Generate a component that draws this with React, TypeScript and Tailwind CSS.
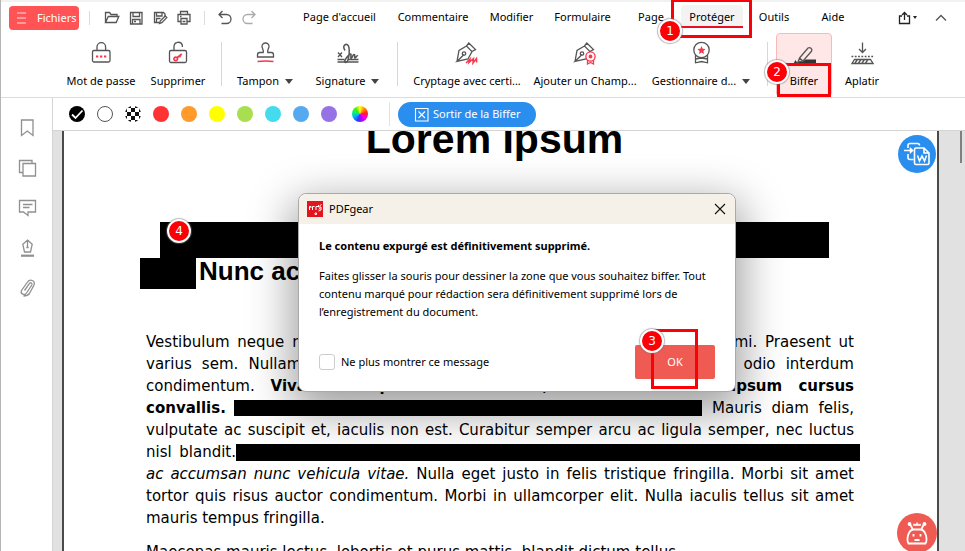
import type { ReactNode } from "react";

type IconProps = { children: ReactNode; size?: number; className?: string };

function Icon({ children, size = 24, className = "text-[#555]" }: IconProps) {
  return (
    <svg
      width={size}
      height={size}
      viewBox={`0 0 ${size} ${size}`}
      fill="none"
      stroke="currentColor"
      strokeWidth="1.3"
      aria-hidden="true"
      className={`shrink-0 ${className}`}
    >
      {children}
    </svg>
  );
}

const RED = "#f5384b";

const quickIcons: { label: string; art: ReactNode }[] = [
  {
    label: "Ouvrir",
    art: (
      <Icon size={16}>
        <path d="M1.500 12.500V2.500h4l1.500 2h6v2M1.500 12.500l2.800-6h10.500l-2.600 6z" />
      </Icon>
    ),
  },
  {
    label: "Enregistrer",
    art: (
      <Icon size={16}>
        <path d="M2.500 2.500h11.500v11.500h-11.500zM5 2.500v4h6.500v-4M4.500 14v-4.500h7.500v4.500M6 11.500h2" />
      </Icon>
    ),
  },
  {
    label: "Enregistrer sous",
    art: (
      <Icon size={16}>
        <path d="M7 12.500H2.500v-10h9l1.500 1.500v2M4.500 2.500v3.500h5.500v-3.500M4.500 12.500v-4h4" />
        <path d="M7.500 13.500l.7-2.500 5-5 1.600 1.600-5 5z" />
      </Icon>
    ),
  },
  {
    label: "Imprimer",
    art: (
      <Icon size={16}>
        <path d="M4.500 4.500v-3h7v3M4.500 11.500h-2.500v-7h12v7h-2.500M5 8.500h6v5.500H5zM6.500 11.500h3M4 6.500h1.500" />
      </Icon>
    ),
  },
];

const tabs = [
  { label: "Page d'accueil", width: "w-[95px]" },
  { label: "Commentaire", width: "w-[92px]" },
  { label: "Modifier", width: "w-[65px]" },
  { label: "Formulaire", width: "w-[77px]" },
  { label: "Page", width: "w-[60px]" },
  { label: "Protéger", width: "w-[62px]", active: true },
  { label: "Outils", width: "w-[62px]" },
  { label: "Aide", width: "w-[56px]" },
];

const penNib = (
  <path d="M2 20.500l2-11 7.500-4.500 5.500 5.500-4 7.500-11 2.500 7-7M10.700 12.500a1.700 1.700 0 1 1-3.400 0 1.700 1.700 0 0 1 3.400 0M11.500 5l2.300-3 6.700 6.500-3.500 2" />
);

type Tool = { label: string; width: string; menu?: boolean; active?: boolean; art: ReactNode };

const toolGroups: Tool[][] = [
  [
    {
      label: "Mot de passe",
      width: "w-[78px]",
      art: (
        <Icon>
          <rect x="3.500" y="9.500" width="17.500" height="11.500" rx="1.500" />
          <path d="M8 9.500V6a4.300 4.300 0 0 1 8.600 0v3.500" />
          <path d="M7 15.500h2.300M11 15.500h2.300M15 15.500h2.300" stroke={RED} strokeWidth="2.200" />
        </Icon>
      ),
    },
    {
      label: "Supprimer",
      width: "w-[76px]",
      art: (
        <Icon>
          <rect x="3.500" y="9.500" width="17" height="12" rx="1.500" />
          <path d="M8 9.500V5.500a4.300 4.300 0 0 1 8.300-1.500V6" />
          <path d="M11.500 17.500a1.800 1.800 0 1 1-3.500 0 1.800 1.800 0 0 1 3.500 0M11.300 16.500l4.500-3.500M13.500 15l1 1.300" stroke={RED} strokeWidth="1.700" />
        </Icon>
      ),
    },
  ],
  [
    {
      label: "Tampon",
      width: "w-[76px]",
      menu: true,
      art: (
        <Icon>
          <path d="M10.200 11.500c.8-2.500-1.200-4-1.200-6a3.500 3.500 0 0 1 7 0c0 2-2 3.500-1.200 6h3.700q2 0 2 2.500v2h-16V14q0-2.500 2-2.500z" />
          <path d="M4.500 20.500q8-1 16 0" stroke={RED} strokeWidth="1.700" />
        </Icon>
      ),
    },
    {
      label: "Signature",
      width: "w-[89px]",
      menu: true,
      art: (
        <Icon>
          <path d="M2 11.500l4 4.500M6 11.500L2 16M1.500 18.500h7M12 18.500h10.500M1.500 21h21" />
          <path d="M9 9.500C5.500 4 11 1.500 12.500 5c1.500 4 .5 17-3 16.500-3-.5 3-8 5-8.500 1.500 0-.5 4 .5 4.500 1.500 0 1.500-4 3-4s0 3.500 1 3.500 1.500-3 3-2" strokeWidth="1.500" />
        </Icon>
      ),
    },
  ],
  [
    {
      label: "Cryptage avec certi...",
      width: "w-[128px]",
      art: (
        <Icon>
          {penNib}
          <path d="M11 22l4-4-1 3.500 4.500-4-.5 4.500 3.500-4.500.2 4" stroke={RED} strokeWidth="1.500" />
        </Icon>
      ),
    },
    {
      label: "Ajouter un Champ...",
      width: "w-[108px]",
      art: (
        <Icon>
          {penNib}
          <circle cx="17.500" cy="15.500" r="4.600" fill="white" stroke={RED} />
          <circle cx="17.500" cy="15.500" r="1.300" fill={RED} stroke={RED} />
          <path d="M14.500 19v4l3-1.500 3 1.500v-4" stroke={RED} />
        </Icon>
      ),
    },
    {
      label: "Gestionnaire d...",
      width: "w-[124px]",
      menu: true,
      art: (
        <Icon>
          <circle cx="12.500" cy="9" r="7.700" />
          <path d="M6.500 14v7.800l6-1.300 6 1.300v-7.800M6.500 18l6-1 6 1" />
          <path d="M12.500 5l1.200 2.700 2.900.3-2.200 2 .6 2.900-2.500-1.500-2.500 1.500.6-2.900-2.200-2 2.900-.3z" fill={RED} stroke="none" />
        </Icon>
      ),
    },
  ],
  [
    {
      label: "Biffer",
      width: "w-14",
      active: true,
      art: (
        <Icon>
          <path d="M7.500 17L16 7q1.500-1 3 .3t.5 3L11 20l-5 1zM7.500 17l3.500 3" />
          <path d="M13.500 18.500H24v5H1l2.500-4.500 1.500 2.500 6-1z" fill="#333" stroke="none" />
        </Icon>
      ),
    },
    {
      label: "Aplatir",
      width: "w-[60px]",
      art: (
        <Icon>
          <path d="M12.500 1.500v9.500M9 8l3.500 3.500L16 8" />
          <path d="M1.500 15.500h22" strokeDasharray="1.800 1.500" />
          <path d="M4.500 18.500h16l2.500 4h-21zM5 22l2.500-3.500M8.500 22l2.500-3.500M12 22l2.500-3.500M15.500 22l2.500-3.500" />
        </Icon>
      ),
    },
  ],
];

const sideIcons: { label: string; art: ReactNode }[] = [
  { label: "Signets", art: <path d="M4.500 2h11.500v15.500l-5.700-4.500-5.800 4.500z" /> },
  { label: "Pages", art: <path d="M6 5.500h12.500v12.500H6zM6 14.500H2.500V2.500h12.500v3" /> },
  { label: "Commentaires", art: <path d="M2.500 2.500h16v11.500h-7.500v3.500l-4.500-3.500h-4zM6 6.500h9.500M6 9.500h6.500" /> },
  {
    label: "Signatures",
    art: (
      <>
        <path d="M10.500 2l4.700 4.200-1.700 7.800h-6l-1.700-7.800zM10.500 2.500v6.500M9.300 9.500h2.400" />
        <path d="M4 17.700h13" strokeWidth="2.200" />
      </>
    ),
  },
  {
    label: "Pièces jointes",
    art: <path d="M7.500 12.500l5-7c1-1.500 3.200-.2 2.300 1.500L9.500 15c-2 3-6.500 1-5-2.500l6-8.500c2.500-3.500 8-1.500 6.500 3L12.500 15.500c-1.500 2-4 2.500-6 2.500" />,
  },
];

const colors = [
  { name: "Rouge", fill: "bg-[#ff3333]" },
  { name: "Orange", fill: "bg-[#ff9a2b]" },
  { name: "Jaune", fill: "bg-[#ffff00]" },
  { name: "Vert", fill: "bg-[#a8df50]" },
  { name: "Cyan", fill: "bg-[#44dbef]" },
  { name: "Bleu", fill: "bg-[#55a9ee]" },
  { name: "Violet", fill: "bg-[#9673e4]" },
];

const checks = [0, 1, 2, 3, 4].flatMap((row) =>
  [0, 1, 2, 3, 4].filter((col) => (row + col) % 2 === 1).map((col) => [col * 4 - 2, row * 4 - 2]),
);

function Marker({ n, place }: { n: number; place: string }) {
  return (
    <span
      className={`absolute z-20 flex size-6 items-center justify-center rounded-full border-2 border-white bg-[#fb0007] font-['DejaVu_Sans',sans-serif] text-xs text-white shadow-[0_0_1px_1px_rgba(120,120,120,0.5)] ${place}`}
    >
      {n}
    </span>
  );
}

function Line({ children }: { children: ReactNode }) {
  return <span className="block whitespace-nowrap [text-align-last:justify]">{children}</span>;
}

function MenuBar() {
  return (
    <div className="flex h-8 items-center pl-2">
      <button className="flex h-6 w-[70px] items-center gap-2.5 rounded-sm bg-[#ff5355] pl-2 text-white">
        <svg width="10" height="12" viewBox="0 0 10 12" stroke="#ffb3b3" strokeWidth="1.500" aria-hidden="true" className="shrink-0">
          <path d="M0 1h9M0 6h9M0 11h9" />
        </svg>
        Fichiers
      </button>
      <span className="ml-2.5 h-3.5 w-px bg-[#dcdcdc]" />
      <div className="ml-3.5 flex gap-2">
        {quickIcons.map((q) => (
          <button key={q.label} aria-label={q.label}>{q.art}</button>
        ))}
      </div>
      <span className="ml-3 h-3.5 w-px bg-[#dcdcdc]" />
      <button aria-label="Annuler" className="ml-3">
        <Icon size={16}>
          <path d="M5.500 1l-3.500 3.500L5.500 8M2 4.500h7.500a4.500 4.500 0 0 1 0 9H4.500" />
        </Icon>
      </button>
      <button aria-label="Rétablir" className="ml-2">
        <Icon size={16} className="text-[#aaa]">
          <path d="M10.500 1L14 4.500 10.500 8M14 4.500H6.500a4.500 4.500 0 0 0 0 9h5" />
        </Icon>
      </button>
      <nav className="ml-[35px] flex h-full items-start pt-[3px]">
        {tabs.map((t) => (
          <button
            key={t.label}
            className={`h-[23px] shrink-0 whitespace-nowrap ${t.width} ${t.active ? "rounded-t-sm border-b-2 border-[#e81123] bg-[#f3f3f3] pt-0.5" : ""}`}
          >
            {t.label}
          </button>
        ))}
      </nav>
      <button aria-label="Partager" className="mr-4 ml-auto flex items-center">
        <Icon size={14} className="text-[#222]">
          <path d="M4 5H1.500v7.500h10V5H9M6.500 9V1.500M4 4l2.500-2.500L9 4" />
        </Icon>
        <svg width="6" height="4" viewBox="0 0 6 4" aria-hidden="true"><path d="M1 0h4L3 3z" fill="#222" /></svg>
      </button>
      <button aria-label="Réduire le ruban" className="mr-[17px]">
        <Icon size={14}>
          <path d="M2 9.500l5-5 5 5" />
        </Icon>
      </button>
    </div>
  );
}

function Toolbar() {
  return (
    <div className="flex h-16 border-b border-[#dcdcdc] pl-[61px]">
      {toolGroups.map((group, i) => (
        <div key={group[0].label} className="flex">
          {i > 0 && <span className={`mt-2 h-11 w-px bg-[#d8d8d8] ${i === 3 ? "mr-2 ml-1" : "mx-[5px]"}`} />}
          {group.map((t) => (
            <button
              key={t.label}
              className={`-mt-px flex h-16 shrink-0 flex-col items-center whitespace-nowrap border pt-[7px] ${t.width} ${
                t.active ? "rounded-sm border-[#f9b9b9] bg-[#ffe7e7]" : "border-transparent"
              }`}
            >
              {t.art}
              <span className="mt-2 flex items-center gap-1.5">
                {t.label}
                {t.menu && (
                  <svg width="8" height="5" viewBox="0 0 8 5" aria-hidden="true"><path d="M0 0h8L4 5z" fill="#444" /></svg>
                )}
              </span>
            </button>
          ))}
        </div>
      ))}
    </div>
  );
}

function ColorBar() {
  return (
    <div className="flex h-[33px] shrink-0 items-center border-b border-[#d4d4d4] bg-white pl-4">
      <div className="flex gap-3">
        <button aria-label="Noir" className="size-4 rounded-full bg-black">
          <svg width="16" height="16" viewBox="0 0 16 16" fill="none" stroke="white" strokeWidth="1.800" aria-hidden="true">
            <path d="M3 8.500l3.500 3.500L13.500 4.500" />
          </svg>
        </button>
        <button aria-label="Blanc" className="size-4 rounded-full border border-[#555] bg-white" />
        <button aria-label="Transparent" className="size-4 overflow-hidden rounded-full">
          <svg width="16" height="16" viewBox="0 0 16 16" aria-hidden="true">
            {checks.map(([x, y]) => (
              <rect key={`${x}-${y}`} x={x} y={y} width="4" height="4" fill="#111" />
            ))}
          </svg>
        </button>
        {colors.map((c) => (
          <button key={c.name} aria-label={c.name} className={`size-4 rounded-full ${c.fill}`} />
        ))}
      </div>
      <button
        aria-label="Autre couleur"
        className="ml-[15px] size-4 rounded-full bg-[conic-gradient(#ff2,#f80,#f22,#f0c,#b0f,#33f,#0af,#0e8,#4e0,#ff2)]"
      />
      <span className="ml-[21px] h-6 w-px bg-[#e2e2e2]" />
      <button className="ml-2 flex h-[25px] items-center gap-1 rounded-full bg-[#2a8eef] px-4 text-white">
        <Icon size={15} className="text-white">
          <path d="M1.500 1.500h12.500v12.500H1.500zM4.500 4.500l6.500 6.500M11 4.500l-6.500 6.500" strokeWidth="1.100" />
        </Icon>
        Sortir de la Biffer
      </button>
    </div>
  );
}

function Document() {
  return (
    <article className="mr-[26px] ml-[9px] h-full flex-1 overflow-hidden border-x-2 border-[#4a4a4a] bg-white text-black">
      <h1 className="-mt-[15px] mr-3 text-center font-['Liberation_Sans',Arial,sans-serif] text-[41px] leading-[46px] font-bold">
        Lorem Ipsum
      </h1>
      <div className="mt-[60px] ml-24 h-9 w-[669px] bg-black" />
      <h2 className="ml-[76px] flex h-[31px] font-['Liberation_Sans',Arial,sans-serif] text-[26px] leading-[26px] font-bold">
        <span className="mr-[3px] w-14 bg-black" />
        Nunc ac
      </h2>
      <div className="mt-[42px] mr-[83px] ml-[82px] font-['DejaVu_Sans',Verdana,sans-serif] text-[15px] leading-[22px]">
        <p>
          <Line>Vestibulum neque massa, scelerisque sit amet ligula eu, congue molestie mi. Praesent ut</Line>
          <Line>varius sem. Nullam at porttitor arcu, nec lacinia nisi. Ut ac dolor vitae odio interdum</Line>
          <Line>
            condimentum. <b>Vivamus dapibus sodales ex, vitae malesuada ipsum cursus</b>
          </Line>
          <span className="flex items-center whitespace-nowrap">
            <b className="w-[82px]">convallis.</b>
            <span className="mr-2.5 ml-1.5 h-4 flex-1 bg-black" />
            <span className="w-[142px] [text-align-last:justify]">Mauris diam felis,</span>
          </span>
          <Line>vulputate ac suscipit et, iaculis non est. Curabitur semper arcu ac ligula semper, nec luctus</Line>
          <span className="-mr-1.5 flex items-center whitespace-nowrap">
            <span className="w-[90px] [text-align-last:justify]">nisl blandit.</span>
            <span className="h-[17px] flex-1 bg-black" />
          </span>
          <Line>
            <i>ac accumsan nunc vehicula vitae.</i> Nulla eget justo in felis tristique fringilla. Morbi sit amet
          </Line>
          <Line>tortor quis risus auctor condimentum. Morbi in ullamcorper elit. Nulla iaculis tellus sit amet</Line>
          <span className="block">mauris tempus fringilla.</span>
        </p>
        <p className="mt-3 whitespace-nowrap">Maecenas mauris lectus, lobortis et purus mattis, blandit dictum tellus.</p>
      </div>
    </article>
  );
}

function Dialog() {
  return (
    <section
      role="dialog"
      aria-label="PDFgear"
      className="absolute top-[193px] left-[297px] z-10 w-[438px] rounded-lg border border-[#a9a9a9] bg-white shadow-[0_14px_44px_6px_rgba(0,0,0,0.38)]"
    >
      <header className="flex h-[30px] items-center rounded-t-lg bg-[#f5f1e9] px-2">
        <svg width="16" height="16" viewBox="0 0 16 16" fill="none" stroke="white" aria-hidden="true">
          <rect width="16" height="16" fill="#e3141d" stroke="none" />
          <path d="M2.500 9V5.500h1.500v1.500M5.500 9V5.500h2M9 9V5.500h2M12 8.500l1-1.500M12.500 5l2-1.500M8 12v1.500h1.500v-1.500zM11.500 4v2h2.500V9l-2.500 1" />
        </svg>
        <span className="ml-1.5">PDFgear</span>
        <button aria-label="Fermer" className="ml-auto">
          <Icon size={14} className="text-[#111]">
            <path d="M2 2l10 10M12 2L2 12" strokeWidth="1.100" />
          </Icon>
        </button>
      </header>
      <div className="px-5 pt-[13px] pb-3">
        <p className="leading-[18px] font-bold">Le contenu expurgé est définitivement supprimé.</p>
        <p className="mt-3 leading-[18px] whitespace-nowrap">
          Faites glisser la souris pour dessiner la zone que vous souhaitez biffer. Tout
          <br />
          contenu marqué pour rédaction sera définitivement supprimé lors de
          <br />
          l’enregistrement du document.
        </p>
        <div className="mt-6 flex h-[34px] items-center">
          <label className="flex items-center gap-1.5">
            <input type="checkbox" className="size-4 appearance-none rounded-[3px] border border-[#ccc] bg-white" />
            Ne plus montrer ce message
          </label>
          <button className="ml-auto h-[34px] w-20 rounded-xs bg-[#ef5a53] text-white">OK</button>
        </div>
      </div>
      <span className="pointer-events-none absolute top-[135px] left-[352px] h-[60px] w-[47px] border-3 border-[#fb0007]" />
      <Marker n={3} place="top-[135px] left-[341px]" />
    </section>
  );
}

export default function App() {
  return (
    <div className="relative flex h-screen flex-col overflow-hidden border-l border-l-[#b5b5b5] bg-white font-['Noto_Sans','Segoe_UI',sans-serif] text-[11px] leading-4 text-black">
      <div className="h-0.5 shrink-0 bg-[#f1f1f1]" />
      <MenuBar />
      <Toolbar />
      <div className="flex min-h-0 flex-1">
        <aside className="flex w-[52px] shrink-0 flex-col items-center gap-5 border-r border-[#d4d4d4] pt-5">
          {sideIcons.map((s) => (
            <button key={s.label} aria-label={s.label}>
              <Icon size={20} className="text-[#909090]">{s.art}</Icon>
            </button>
          ))}
        </aside>
        <main className="flex min-w-0 flex-1 flex-col">
          <ColorBar />
          <div className="relative flex min-h-0 flex-1 bg-[#e1e1e1]">
            <Document />
            <span className="absolute top-0 right-[3px] h-8 w-0.5 bg-[#808080]" />
            <button
              aria-label="Convertir en Word"
              className="absolute top-1 right-[29px] flex size-[38px] items-center justify-center rounded-full bg-[#2a8eef]"
            >
              <svg width="28" height="28" viewBox="0 0 28 28" fill="none" stroke="white" strokeWidth="1.600" aria-hidden="true">
                <path d="M5 8V5.500q0-2 2-2h7.500q2 0 2 2M5 14v3.500q0 2 2 2h3.500M1 10.500h7" />
                <path d="M7 7.500l3.500 3-3.500 3z" fill="white" strokeWidth="0.500" />
                <path d="M13 8h8l5 5v10q0 1.500-1.500 1.500h-11.500q-1.500 0-1.500-1.500v-13.500q0-1.500 1.500-1.500zM21 8v5h5" />
                <path d="M14.500 15.500l2 5.500 2.500-5 2.500 5 2-5.500" />
              </svg>
            </button>
            <button
              aria-label="Assistant"
              className="absolute right-[28px] -bottom-[2px] flex size-10 items-center justify-center rounded-full bg-[#ef5a53]"
            >
              <svg width="24" height="26" viewBox="0 0 24 26" fill="none" stroke="white" strokeWidth="1.800" aria-hidden="true">
                <path d="M3.500 23.500c-2-3-1-13.500 5-14h7c6 .5 7 11 5 14zM7.500 9L5.500 5M16.500 9l2-4" />
                <path d="M8.500 5.500V4l2 .5L12 2.500l1.500 2 2-.5v1.500z" fill="white" strokeWidth="0.600" />
                <circle cx="4.500" cy="4" r="1" fill="white" />
                <circle cx="19.500" cy="4" r="1" fill="white" />
                <path d="M8.500 14v2.500M15.500 14v2.500M9.500 20h5" />
              </svg>
            </button>
          </div>
        </main>
      </div>

      <span className="pointer-events-none absolute -top-px left-[670px] h-[39px] w-[81px] border-3 border-[#fb0007]" />
      <Marker n={1} place="top-[19px] left-[657px]" />
      <span className="pointer-events-none absolute top-[63px] left-[776px] h-[34px] w-[54px] border-3 border-[#fb0007]" />
      <Marker n={2} place="top-[60px] left-[764px]" />
      <Marker n={4} place="top-[219px] left-[166px]" />
      <Dialog />
    </div>
  );
}
